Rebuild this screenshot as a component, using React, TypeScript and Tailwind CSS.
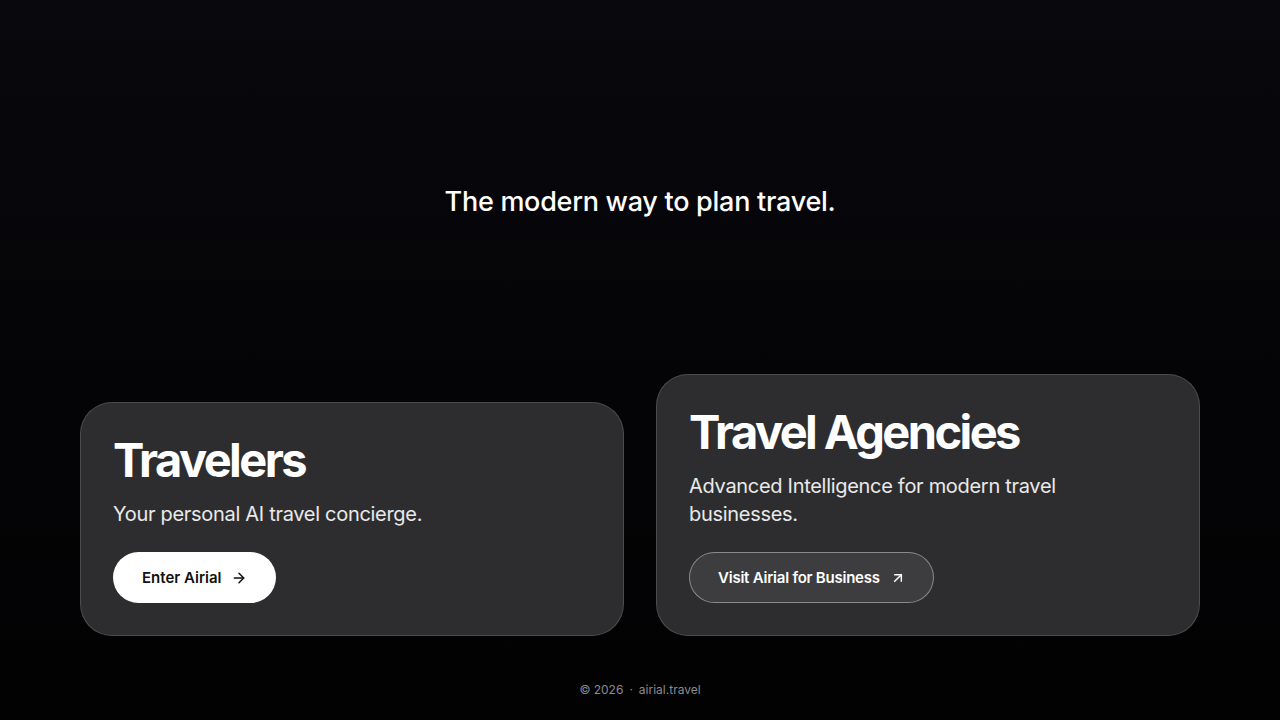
import React from "react";
import { ArrowRight, ArrowUpRight } from "lucide-react";

export default function App() {
  return (
    <div
      className="h-[720px] w-full flex flex-col bg-gradient-to-b from-[#09080d] to-[#020203] text-white overflow-hidden"
      style={{ fontFamily: "Inter, 'Noto Sans', sans-serif" }}
    >
      <div className="pt-[184px] flex justify-center">
        <h2 className="text-[27px] leading-9 font-medium tracking-[-0.01em] text-white">
          The modern way to plan travel.
        </h2>
      </div>

      <div className="mt-auto px-20 grid grid-cols-2 gap-8 items-end">
        <div className="rounded-[32px] border border-white/15 bg-[#2d2d30] p-8">
          <h1 className="text-[47px] leading-[49px] font-bold tracking-[-0.055em]">Travelers</h1>
          <p className="mt-4 text-[20px] leading-7 text-white/90 tracking-[-0.015em]">
            Your personal AI travel concierge.
          </p>
          <button className="mt-6 h-[51px] rounded-full bg-white text-[#111] pl-[29px] pr-[29px] flex items-center gap-2.5 text-[15px] leading-[20px] font-semibold">
            Enter Airial
            <ArrowRight size={16} strokeWidth={2.25} />
          </button>
        </div>

        <div className="rounded-[32px] border border-white/15 bg-[#2d2d30] p-8">
          <h1 className="text-[47px] leading-[49px] font-bold tracking-[-0.055em]">Travel Agencies</h1>
          <p className="mt-4 text-[20px] leading-7 text-white/90 max-w-[400px] tracking-[-0.015em]">
            Advanced Intelligence for modern travel businesses.
          </p>
          <button className="mt-6 h-[51px] rounded-full bg-[#3d3d40] border border-white/40 text-white pl-[28px] pr-[27px] flex items-center gap-2.5 text-[15px] leading-[20px] font-semibold tracking-[-0.015em]">
            Visit Airial for Business
            <ArrowUpRight size={16} strokeWidth={2.25} />
          </button>
        </div>
      </div>

      <div className="h-[84px] shrink-0 pt-[46px] flex justify-center">
        <span className="h-4 text-[12px] leading-4 text-[#8a8a8f] flex items-center">
          <span>© 2026</span>
          <span className="mx-[6px]">·</span>
          <span>airial.travel</span>
        </span>
      </div>
    </div>
  );
}
